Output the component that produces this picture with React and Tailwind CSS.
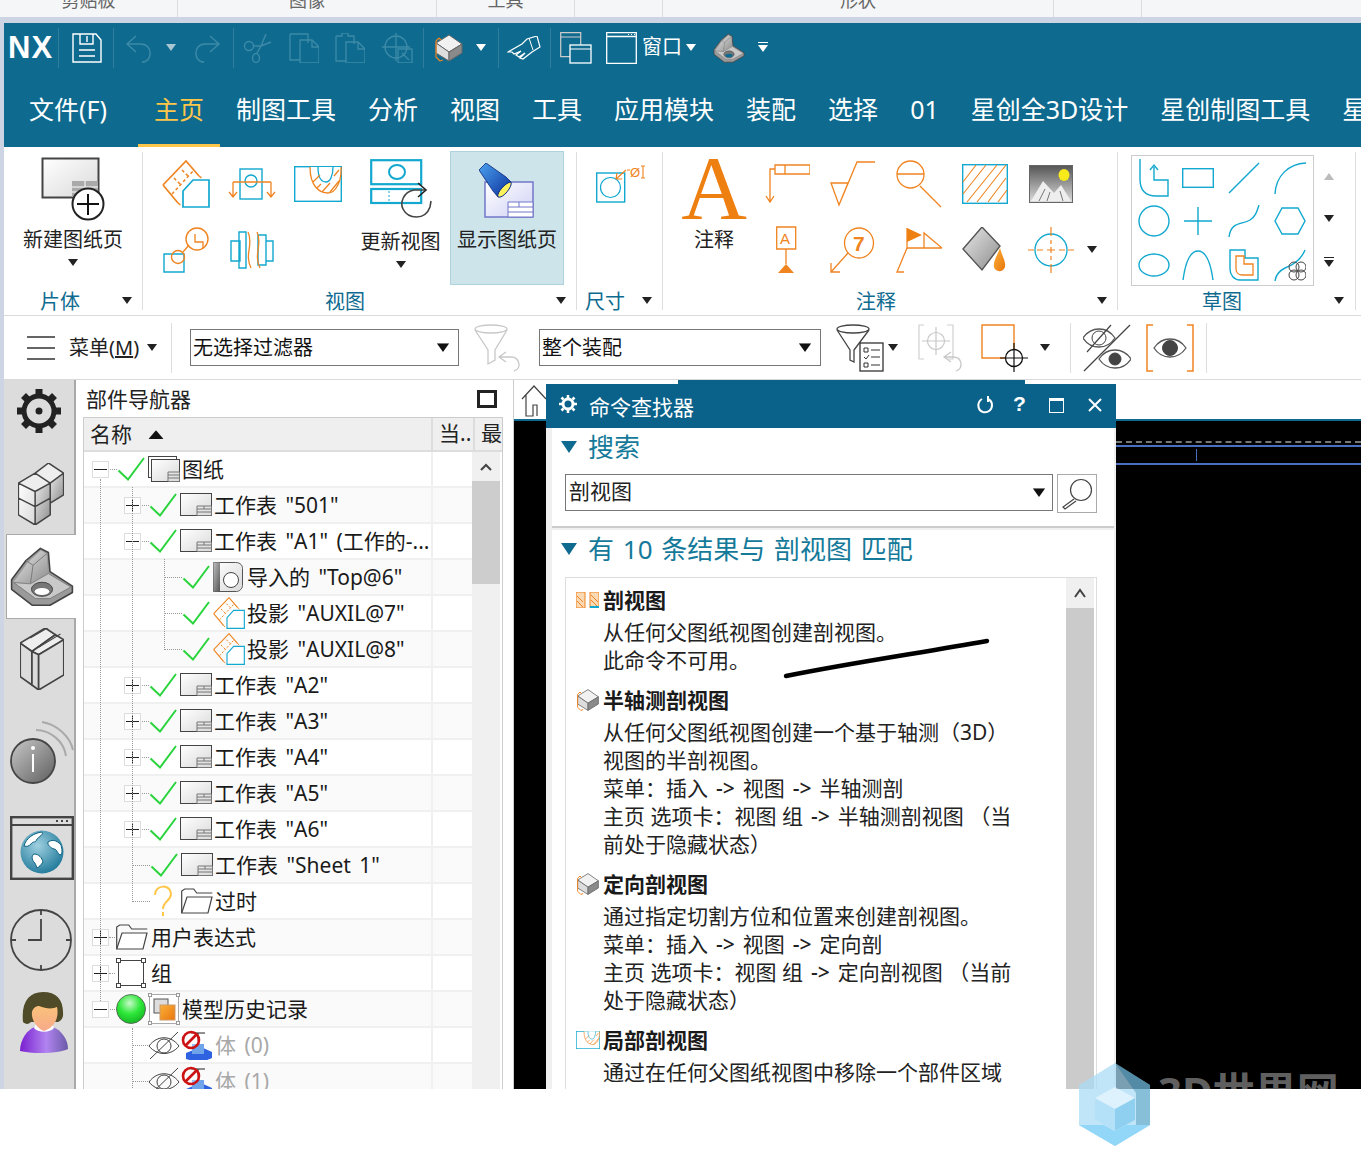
import React from 'react';

const OR = '#ef8420';
const CY = '#12a8cf';

// tiny dropdown triangle
const Tri = ({ fill = '#222', bar = false, className = '' }) => (
  <svg width="10" height={bar ? 11 : 7} viewBox={bar ? '0 0 10 11' : '0 0 10 7'} className={`flex-none ${className}`}>
    {bar && <path d="M0 0.5h10" stroke={fill} />}
    <path d={bar ? 'M0 3h10L5 10z' : 'M0 0h10L5 7z'} fill={fill} />
  </svg>
);

const Ic = ({ w = 48, h = 48, vb, className = '', children }) => (
  <svg width={w} height={h} viewBox={vb || `0 0 ${w} ${h}`} fill="none" className={`flex-none ${className}`}>
    {children}
  </svg>
);

const Defs = () => (
  <svg width="0" height="0" className="absolute">
    <defs>
      <linearGradient id="gPaper" x1="0" y1="0" x2="1" y2="1">
        <stop offset="0" stopColor="#fff" />
        <stop offset="1" stopColor="#d9d9d9" />
      </linearGradient>
      <linearGradient id="gGrey" x1="0" y1="0" x2="1" y2="1">
        <stop offset="0" stopColor="#e8e8e8" />
        <stop offset="1" stopColor="#8d8d8d" />
      </linearGradient>
      <linearGradient id="gDark" x1="0" y1="0" x2="1" y2="1">
        <stop offset="0" stopColor="#bdbdbd" />
        <stop offset="1" stopColor="#555" />
      </linearGradient>
      <linearGradient id="gLav" x1="0" y1="0" x2="1" y2="1">
        <stop offset="0" stopColor="#fff" />
        <stop offset="1" stopColor="#cfd0f5" />
      </linearGradient>
      <linearGradient id="gTorch" x1="0" y1="0" x2="1" y2="1">
        <stop offset="0" stopColor="#4aa2f0" />
        <stop offset="1" stopColor="#0c2f9a" />
      </linearGradient>
      <linearGradient id="gOrange" x1="0" y1="0" x2="1" y2="1">
        <stop offset="0" stopColor="#fbb03b" />
        <stop offset="1" stopColor="#e9760c" />
      </linearGradient>
      <linearGradient id="gSky" x1="0" y1="0" x2="0" y2="1">
        <stop offset="0" stopColor="#555" />
        <stop offset="1" stopColor="#ddd" />
      </linearGradient>
      <radialGradient id="gBall" cx="0.45" cy="0.3" r="0.75">
        <stop offset="0" stopColor="#c8f8c8" />
        <stop offset="0.5" stopColor="#2ee83a" />
        <stop offset="1" stopColor="#12b020" />
      </radialGradient>
      <radialGradient id="gGlobe" cx="0.4" cy="0.35" r="0.8">
        <stop offset="0" stopColor="#9fd0e0" />
        <stop offset="1" stopColor="#0b6b8f" />
      </radialGradient>
      <linearGradient id="gPurple" x1="0" y1="0" x2="1" y2="0">
        <stop offset="0" stopColor="#7a1fd0" />
        <stop offset="0.55" stopColor="#b184f0" />
        <stop offset="1" stopColor="#6b5aa8" />
      </linearGradient>
      <linearGradient id="gFace" x1="0" y1="0" x2="0" y2="1">
        <stop offset="0" stopColor="#fbc27a" />
        <stop offset="1" stopColor="#f7a98a" />
      </linearGradient>
      <linearGradient id="gInfo" x1="0" y1="0" x2="1" y2="1">
        <stop offset="0" stopColor="#c9c9c9" />
        <stop offset="1" stopColor="#5e5e5e" />
      </linearGradient>
    </defs>
  </svg>
);

/* ---------- quick access ---------- */
const DIM = '#3d8aa8';
const SaveIcon = () => (
  <Ic w={30} h={30}>
    <path d="M1 1h23l5 6v22H1z" stroke="#fff" strokeWidth="1.4" />
    <path d="M8 1v10h13V1M15 3v6M7 17h16M7 23h16" stroke="#fff" strokeWidth="1.4" />
  </Ic>
);
const Undo = ({ flip }) => (
  <Ic w={28} h={30} className={flip ? '-scale-x-100' : ''}>
    <path d="M11 3L2 11l9 8M2 11h14c12 0 12 18 1 18" stroke={DIM} strokeWidth="1.4" />
  </Ic>
);
const Scissors = () => (
  <Ic w={30} h={30}>
    <g stroke={DIM} strokeWidth="1.4">
      <circle cx="6" cy="13" r="4.5" /><ellipse cx="13" cy="25" rx="3.5" ry="4.5" />
      <path d="M10 13h8l10-4M14 20l4-7 5-12" />
    </g>
  </Ic>
);
const CopyIc = () => (
  <Ic w={30} h={30}>
    <path d="M1 1h18v9M1 1v26h10" stroke={DIM} strokeWidth="1.3" />
    <path d="M11 7h12l7 7v16H11z M23 7v7h7" stroke={DIM} strokeWidth="1.3" />
  </Ic>
);
const PasteIc = () => (
  <Ic w={30} h={30}>
    <path d="M1 3h6V0h6v3h6v8M1 3v25h10" stroke={DIM} strokeWidth="1.3" />
    <path d="M11 9h12l7 7v14H11z M23 9v7h7" stroke={DIM} strokeWidth="1.3" />
  </Ic>
);
const CrossIc = () => (
  <Ic w={32} h={30}>
    <circle cx="15" cy="14" r="11" stroke={DIM} strokeWidth="1.3" />
    <path d="M15 0v28M1 14h28M17 16h14v14H17zM21 20l7 7" stroke={DIM} strokeWidth="1.3" />
  </Ic>
);
const ShapeIc = ({ s = 30 }) => (
  <Ic w={s} h={s} vb="0 0 30 30">
    <path d="M2 10L15 2l13 9-13 8z" fill="#f1f1f1" stroke="#666" strokeWidth="1" />
    <path d="M2 10l13 9v9L2 20z" fill="#ddd" stroke="#666" strokeWidth="1" />
    <path d="M15 19l13-8v9l-13 8z" fill="#8a8a8a" stroke="#666" strokeWidth="1" />
    <path d="M5 5L2 8v16l4 4M5 5l2 2M6 28l3-1" stroke={OR} strokeWidth="1.2" />
  </Ic>
);
const HandIc = () => (
  <Ic w={34} h={24}>
    <path d="M1 16l14-8 5-5 10-3 3 11-8 5-9 7-3-1 5-5-6 4-3-2 5-4-7 3-2-2z" stroke="#fff" strokeWidth="1.2" />
    <path d="M22 2l4 12" stroke="#fff" strokeWidth="1" />
  </Ic>
);
const WinA = () => (
  <Ic w={32} h={32}>
    <path d="M.7.7h20v24H.7zM.7 5h20" stroke="#ccc" strokeWidth="1.2" />
    <rect x="10" y="13" width="21" height="18" fill="#0e6b8f" stroke="#fff" strokeWidth="1.3" />
    <path d="M10 17h21" stroke="#fff" />
  </Ic>
);
const WinB = () => (
  <Ic w={31} h={32}>
    <path d="M.7.7h29.6v30.6H.7zM.7 4.5h29.6" stroke="#fff" strokeWidth="1.3" />
    <path d="M22 2.5h1M25 2.5h1M28 2.5h1" stroke="#fff" />
  </Ic>
);
// bracket with gusset and a hole, same part in the quick bar and the side tab
const PartIc = ({ w = 32, h = 30, hole = '#0e6b8f' }) => (
  <Ic w={w} h={h} vb="0 0 200 190">
    <path d="M5 105L50 45 95 7l25 13 5 60 70 45v20l-70 40H70L5 135z" fill="#9a9a9a" stroke="#444" strokeWidth="5" strokeLinejoin="round" />
    <path d="M12 112L55 52 96 14l18 10 5 62-55 30z" fill="url(#gGrey)" />
    <path d="M12 114l52 4 56-32 70 42-65 36H80z" fill="#c9c9c9" stroke="#666" strokeWidth="2" />
    <path d="M50 45l22 15 42-36M72 60L64 116" stroke="#777" strokeWidth="3" />
    <ellipse cx="100" cy="135" rx="33" ry="22" fill="#777" stroke="#444" strokeWidth="3" />
    <ellipse cx="100" cy="142" rx="23" ry="11" fill={hole} />
  </Ic>
);

/* ---------- ribbon icons ---------- */
const NewSheetIc = () => (
  <Ic w={64} h={64}>
    <rect x="1.5" y="1.5" width="56" height="39" fill="url(#gPaper)" stroke="#444" strokeWidth="2" />
    <path d="M31 24h26v16H31z" fill="#aaa" /><path d="M31 30h26M44 24v6M31 35h26" stroke="#fff" />
    <circle cx="47" cy="47" r="15.5" fill="#fff" stroke="#222" strokeWidth="2" />
    <path d="M47 37v21M36 47h22" stroke="#111" strokeWidth="2" />
  </Ic>
);
const ProjIc = ({ s = 48 }) => (
  <Ic w={s} h={s} vb="0 0 48 48">
    <path d="M1 25L24 1l13 15M1 25l15 18" stroke={OR} strokeWidth="1.7" />
    <path d="M16 43l5 4M37 16l4 3M10 34L32 10M12 18l6 6M20 10l6 6" stroke={OR} strokeWidth="1.5" strokeDasharray="3 2.500" />
    <path d="M21 47V31l10-11h16v27z" fill="#fff" stroke={CY} strokeWidth="1.7" />
  </Ic>
);
const SectionIc = () => (
  <Ic w={48} h={32}>
    <rect x="12" y="1" width="22" height="30" stroke={CY} strokeWidth="1.4" />
    <circle cx="23" cy="13" r="6" stroke={CY} strokeWidth="1.4" />
    <path d="M5 14h38M5 14v15M1 24l4 5 4-5M43 14v15M39 24l4 5 4-5" stroke={OR} strokeWidth="1.3" />
  </Ic>
);
const DetailIc = ({ w = 48, h = 36 }) => (
  <Ic w={w} h={h} vb="0 0 48 36">
    <rect x=".7" y=".7" width="46.6" height="34.6" fill="#fff" stroke={CY} strokeWidth="1.4" />
    <path d="M16 1c0 20 10 26 18 26s13-12 13-22V1" fill="#fff" stroke={OR} strokeWidth="1.3" />
    <path d="M24 1c0 12 4 15 8 15s7-6 7-15" fill="#fff" stroke={CY} strokeWidth="1.3" />
    <path d="M19 16l7-7M23 22l4-4M28 26l8-9M36 26l9-11M40 10l5-6" stroke={OR} strokeWidth="1.3" />
  </Ic>
);
const BreakoutIc = () => (
  <Ic w={46} h={46}>
    <path d="M1 27h20v18H1z" stroke={CY} strokeWidth="1.4" fill="#fff" />
    <circle cx="34" cy="12" r="11" stroke={OR} strokeWidth="1.4" fill="#fff" />
    <circle cx="15" cy="30" r="6.500" stroke={OR} strokeWidth="1.4" />
    <path d="M20 25l6-7M32 7v8h8v6" stroke={OR} strokeWidth="1.3" />
  </Ic>
);
const BrokenIc = () => (
  <Ic w={44} h={38}>
    <path d="M1 10h9v20H1zM9 1h7v36H9zM28 4h8v30h-8zM36 10h7v20h-7z" stroke={CY} strokeWidth="1.4" fill="#fff" />
    <path d="M18 1c6 12-4 22 3 36M27 1c6 12-4 22 3 36" stroke={OR} strokeWidth="1.3" />
  </Ic>
);
const UpdateIc = () => (
  <Ic w={62} h={62}>
    <rect x="1.2" y="1.2" width="50" height="24" stroke={CY} strokeWidth="2.2" />
    <ellipse cx="27" cy="13" rx="8" ry="7" stroke={CY} strokeWidth="2" />
    <rect x="1.2" y="30" width="50" height="14" stroke={CY} strokeWidth="2.2" />
    <path d="M19 32v10" stroke={CY} strokeDasharray="2 2" />
    <path d="M55 31H44C33 33 30 44 33 50c5 10 22 12 27-2l1-6" stroke="#444" strokeWidth="1.6" />
    <path d="M48 24l8 7-8 7" stroke="#222" strokeWidth="1.6" />
  </Ic>
);
const DisplayIc = () => (
  <Ic w={56} h={56}>
    <rect x="6" y="19" width="48" height="35" fill="url(#gLav)" stroke="#7377c8" strokeWidth="1.5" />
    <path d="M29 39h25v15H29z" fill="#fff" stroke="#7377c8" /><path d="M29 44h25M29 49h25M40 39v5" stroke="#7377c8" />
    <path d="M0 7l7-7 20 14 5 5-13 15-5-6z" fill="url(#gTorch)" stroke="#08237a" strokeWidth=".8" />
    <path d="M19 34c-2-4 8-15 13-15 2 4-8 17-13 15z" fill="#fbf25e" stroke="#0a2a86" />
  </Ic>
);
const DimIc = () => (
  <Ic w={50} h={38}>
    <rect x=".7" y="8" width="28" height="29" stroke={CY} strokeWidth="1.4" />
    <circle cx="14.5" cy="22.5" r="10" stroke={CY} strokeWidth="1.2" />
    <path d="M20 14l10-9M20 14l1-6M20 14l6 0" stroke={OR} strokeWidth="1.2" />
    <path d="M31 5h3M45 1h4M47 1v12M45 13h4" stroke={OR} strokeWidth="1.1" />
    <text x="34" y="12" fontSize="13" fill={OR} fontFamily="Liberation Sans">Ø</text>
  </Ic>
);
const LeaderIc = () => (
  <Ic w={46} h={42}>
    <path d="M11 2h35v9H11zM21 2v9M11 6H6v32M2 33l4 6 4-6" stroke={OR} strokeWidth="1.3" />
  </Ic>
);
const SurfaceIc = () => (
  <Ic w={46} h={46}>
    <path d="M1 22h17L9 44zM9 44L27 1h18" stroke={OR} strokeWidth="1.3" />
  </Ic>
);
const DatumIc = () => (
  <Ic w={46} h={48}>
    <circle cx="14.5" cy="14.5" r="13.5" stroke={OR} strokeWidth="1.3" />
    <path d="M1 14h27M24 26l21 21" stroke={OR} strokeWidth="1.3" />
  </Ic>
);
const HatchIc = () => (
  <Ic w={46} h={40}>
    <rect x=".7" y=".7" width="44.6" height="38.6" fill="#fff" stroke={CY} strokeWidth="1.4" />
    <path d="M1 18L14 1M1 30L24 1M5 38L35 1M15 38L44 1M26 38L44 14M36 38l9-12" stroke={OR} strokeWidth="1.1" />
  </Ic>
);
const ImageIc = () => (
  <Ic w={44} h={38}>
    <rect x=".5" y=".5" width="43" height="37" fill="url(#gSky)" stroke="#666" />
    <ellipse cx="35" cy="10" rx="5.500" ry="6" fill="#f7ea1a" />
    <path d="M2 36l12-20 11 12 7-8 10 16z" fill="#eee" />
    <path d="M10 36l6-12M18 36l3-9M34 36l-3-10" stroke="#777" />
  </Ic>
);
const WeldIc = () => (
  <Ic w={24} h={48}>
    <path d="M1.7 1h19v22h-19zM11 23v15" stroke={OR} strokeWidth="1.3" />
    <path d="M3 47l8-9 8 9z" fill={OR} />
    <text x="5" y="18" fontSize="15" fill={OR} fontFamily="Liberation Sans">A</text>
  </Ic>
);
const BalloonIc = () => (
  <Ic w={46} h={46}>
    <ellipse cx="29" cy="16" rx="14.500" ry="15" stroke={OR} strokeWidth="1.3" />
    <path d="M18 26L1 45M1 36v9h9" stroke={OR} strokeWidth="1.3" />
    <text x="23" y="24" fontSize="21" fontWeight="700" fill={OR} fontFamily="Liberation Sans">7</text>
  </Ic>
);
const FlagIc = () => (
  <Ic w={46} h={46}>
    <path d="M11 1l15 7-15 7z" fill="#ee7f11" />
    <path d="M11 1v20M11 21H46L28 6v15M11 21L1 45h7" stroke={OR} strokeWidth="1.3" />
  </Ic>
);
const FillIc = () => (
  <Ic w={46} h={46}>
    <path d="M1 22L20 0l18 19-18 24z" fill="url(#gGrey)" stroke="#555" strokeWidth="1.4" />
    <path d="M38 21c-3 8-7 13-6 19 1 5 9 6 11 0 1-6-3-11-5-19z" fill="url(#gOrange)" />
  </Ic>
);
const CenterIc = () => (
  <Ic w={46} h={46}>
    <ellipse cx="23" cy="23" rx="16" ry="16" stroke={CY} strokeWidth="1.3" />
    <path d="M23 0v9M23 13v4M23 20v6M23 29v4M23 37v9M0 23h6M9 23h6M19 23h8M31 23h6M40 23h6" stroke={OR} strokeWidth="1.2" />
  </Ic>
);
const sk = { stroke: CY, strokeWidth: 1.4 };
const SkIcons = [
  <Ic w={30} h={40}><path d="M1 1v20c0 12 6 17 16 17h12V22H15V9M11 12l4-5 4 5" {...sk} /></Ic>,
  <Ic w={32} h={20}><rect x=".7" y=".7" width="30.6" height="18.6" {...sk} /></Ic>,
  <Ic w={32} h={32}><path d="M1 31L31 1" {...sk} /></Ic>,
  <Ic w={32} h={32}><path d="M1 32C2 14 14 2 32 1" {...sk} /></Ic>,
  <Ic w={32} h={32}><ellipse cx="16" cy="16" rx="15" ry="15" {...sk} /></Ic>,
  <Ic w={28} h={28}><path d="M14 0v28M0 14h28" {...sk} /></Ic>,
  <Ic w={32} h={32}><path d="M1 32C3 16 14 20 22 15 28 11 29 6 31 0" {...sk} /></Ic>,
  <Ic w={32} h={28}><path d="M8 1h16l7 13-7 13H8L1 14z" {...sk} /></Ic>,
  <Ic w={32} h={24}><ellipse cx="16" cy="12" rx="15" ry="11" {...sk} /></Ic>,
  <Ic w={32} h={30}><path d="M1 30C4 8 10 1 16 1s12 7 15 29" {...sk} /></Ic>,
  <Ic w={30} h={32}>
    <path d="M1 1h15v8h13v22H11C5 31 1 26 1 20z" {...sk} />
    <path d="M7 7h8v8h9v11H13c-4 0-6-3-6-6z" stroke={OR} strokeWidth="1.3" />
  </Ic>,
  <Ic w={32} h={32}>
    <path d="M1 32c1-8 6-11 10-13 8-3 16-8 20-18" {...sk} />
    <g stroke="#444" strokeWidth="1"><circle cx="20" cy="18" r="5" /><circle cx="27" cy="18" r="5" /><circle cx="20" cy="26" r="5" /><circle cx="27" cy="26" r="5" /></g>
  </Ic>,
];

/* ---------- toolbar icons ---------- */
const FunnelGhost = () => (
  <Ic w={48} h={48}>
    <ellipse cx="17" cy="5" rx="16" ry="4" stroke="#c8c8c8" strokeWidth="1.3" />
    <path d="M1 6l13 20v14l7-4V26L33 6" stroke="#c8c8c8" strokeWidth="1.3" />
    <path d="M32 28l-7 5 7 5M25 33h12c9 0 11 12 3 14" stroke="#c8c8c8" strokeWidth="1.3" />
  </Ic>
);
const FunnelList = () => (
  <Ic w={48} h={48}>
    <ellipse cx="17" cy="5" rx="16" ry="4" stroke="#444" strokeWidth="1.3" />
    <path d="M1 6l13 20v10l4 2V26L33 6" stroke="#444" strokeWidth="1.3" />
    <rect x="24" y="19" width="23" height="28" fill="#fff" stroke="#333" strokeWidth="1.3" />
    <path d="M28 24h4v4h-4zM35 26h9M28 33l2 2 3-4M35 33h9M28 39h4v4h-4zM35 41h9" stroke="#333" />
  </Ic>
);
const GhostTarget = () => (
  <Ic w={48} h={48}>
    <path d="M6 1H1v34h5M29 1h6v34h-5" stroke="#d0d0d0" strokeWidth="1.2" />
    <circle cx="18" cy="17" r="8.500" stroke="#c8c8c8" strokeWidth="1.2" />
    <path d="M18 3v28M4 17h28" stroke="#c8c8c8" strokeWidth="1.2" />
    <path d="M33 28l-7 5 7 5M26 33h9c9 0 11 11 3 14" stroke="#c8c8c8" strokeWidth="1.3" />
  </Ic>
);
const OrangeTarget = () => (
  <Ic w={48} h={48}>
    <path d="M1 1h32v33H1z" stroke={OR} strokeWidth="1.4" />
    <circle cx="33" cy="34" r="8.500" fill="#fff" stroke="#111" strokeWidth="1.3" />
    <path d="M33 19v29M19 34h28" stroke="#111" strokeWidth="1.2" />
  </Ic>
);
const EyeShape = ({ cx, cy, pupil = '#444', r = 6 }) => (
  <g>
    <path d={`M${cx - 16} ${cy}c8-12 24-12 32 0-8 12-24 12-32 0z`} fill="#fff" stroke="#555" strokeWidth="1.3" />
    <circle cx={cx} cy={cy} r={r} fill={pupil} stroke="#444" />
  </g>
);
const EyeCross = () => (
  <Ic w={48} h={48}>
    <EyeShape cx={16} cy={14} pupil="none" r={7} />
    <path d="M4 28L28 1" stroke="#444" strokeWidth="1.2" />
    <path d="M1 47L47 1" stroke="#444" strokeWidth="1.3" />
    <EyeShape cx={32} cy={35} />
  </Ic>
);
const EyeBrackets = () => (
  <Ic w={48} h={48}>
    <path d="M7 1H1v46h6M41 1h6v46h-6" stroke={OR} strokeWidth="1.5" />
    <EyeShape cx={24} cy={24} r={7.5} />
  </Ic>
);

/* ---------- side tabs ---------- */
const GearIc = () => (
  <Ic w={46} h={46} vb="0 0 46 46">
    <circle cx="23" cy="23" r="15" stroke="#222" strokeWidth="5" />
    <path d="M23 1v7M23 38v7M1 23h7M38 23h7M7.500 7.500l5 5M33.500 33.500l5 5M38.500 7.500l-5 5M12.500 33.500l-5 5" stroke="#222" strokeWidth="7" />
    <circle cx="23" cy="23" r="3.500" fill="#222" />
  </Ic>
);
const CubesIc = () => (
  <Ic w={46} h={62} vb="0 0 135 185">
    <path d="M0 60L50 30 90 0l45 30-40 30-45 25z" fill="#eee" />
    <path d="M0 60l50 25v100L0 155z" fill="url(#gPaper)" />
    <path d="M50 85l45-25v95l-45 30z" fill="url(#gGrey)" />
    <path d="M95 60l40-30v65l-40 25z" fill="url(#gGrey)" />
    <path d="M0 60L50 30 90 0l45 30v65l-40 25v35l-45 30-50-30zM50 30l45 30 40-30M95 60v60M50 85l45-25M0 60l50 25v100M0 105l50 25 45-25" stroke="#444" strokeWidth="4.500" strokeLinejoin="round" />
  </Ic>
);
const BooksIc = () => (
  <Ic w={44} h={62} vb="0 0 130 185">
    <g stroke="#444" strokeWidth="5" strokeLinejoin="round" fill="#dcdcdc">
      <path d="M0 45L75 0l30 20-70 50z" fill="#eee" />
      <path d="M0 45v100l35 25V70z" />
      <path d="M35 70l70-50 25 15-75 45z" fill="#eee" />
      <path d="M35 70l20 10v105l-20-15z" />
      <path d="M55 80l75-45v105l-75 45z" />
    </g>
    <path d="M30 30l65-38M55 58l65-40" stroke="#444" strokeWidth="3" />
  </Ic>
);
const InfoIc = () => (
  <Ic w={64} h={64}>
    <circle cx="23" cy="41" r="22" fill="url(#gInfo)" stroke="#444" strokeWidth="1.8" />
    <circle cx="23" cy="28" r="2" fill="#fff" />
    <path d="M23 34v18" stroke="#fff" strokeWidth="2" />
    <path d="M26 10c14 0 28 11 30 26M32 2c14 2 28 14 31 28" stroke="#aaa" strokeWidth="2" />
  </Ic>
);
const BrowserIc = () => (
  <Ic w={64} h={64}>
    <rect x="1.2" y="1.2" width="61.6" height="61.6" stroke="#444" strokeWidth="2.4" />
    <path d="M1 9h62" stroke="#444" strokeWidth="2" />
    <path d="M46 5h2M51 5h2M56 5h2" stroke="#444" strokeWidth="2" />
    <circle cx="32" cy="36" r="21.500" fill="url(#gGlobe)" />
    <path d="M14 30c2-8 10-13 18-14 2 2-3 5-5 7-1 4-4 2-6 5-2 2-4 3-7 2zM38 26c3-2 8-3 13 3 1 4 2 9-1 10-3-2-3-6-6-6-3-1-7-4-6-7zM24 38c5 0 8 4 9 8-2 3-4 5-6 6-1-3-2-5-3-6-2-2-3-6 0-8z" fill="#fff" stroke="#0b5f80" />
  </Ic>
);
const ClockIc = () => (
  <Ic w={62} h={62}>
    <circle cx="31" cy="31" r="30" stroke="#444" strokeWidth="1.8" />
    <path d="M31 1v5M31 56v5M1 31h5M56 31h5M31 10v21H18" stroke="#444" strokeWidth="1.8" />
  </Ic>
);
const UserIc = () => (
  <Ic w={50} h={62}>
    <path d="M1 59c0-12 8-22 15-24h18c8 3 15 12 15 22-10 5-36 5-48 2z" fill="url(#gPurple)" />
    <path d="M15 36c4 5 16 5 20 0l-2-4H17z" fill="#fff" />
    <path d="M4 30C2 10 10 0 24 0s21 8 20 24c-1 4-4 6-6 6H12c-3 3-6 2-8 0z" fill="#4f4a28" />
    <path d="M13 20c1-4 4-6 7-6 7 3 14 3 18 1 2 9-1 20-13 24-8-3-13-12-12-19z" fill="url(#gFace)" />
  </Ic>
);

/* ---------- tree icons ---------- */
const Check = () => (
  <Ic w={28} h={24}><path d="M1.500 13.500l9.500 9L27 1" stroke="#2ad43c" strokeWidth="2" /></Ic>
);
const Sheet = () => (
  <Ic w={32} h={24} vb="0 0 32 24">
    <rect x=".5" y=".5" width="31" height="22" fill="url(#gPaper)" stroke="#444" />
    <path d="M17 13h14.500v9.500H17zM17 16h14.500M17 19h14.500M24 13v3" stroke="#777" />
  </Ic>
);
const SheetStack = () => (
  <Ic w={32} h={26}>
    <rect x=".5" y=".5" width="28" height="21" fill="#fff" stroke="#444" />
    <rect x="3.500" y="3.500" width="28" height="22" fill="url(#gPaper)" stroke="#444" />
    <path d="M20 16h11.500v9.500H20zM20 19h11.500M20 22h11.500" stroke="#777" />
  </Ic>
);
const ViewIc = () => (
  <Ic w={30} h={30}>
    <path d="M.5.5h22c5 0 7 3 7 6v17c0 3-3 6-6 6H.5z" fill="url(#gPaper)" stroke="#555" />
    <path d="M.5.5H7v29H.5z" fill="url(#gDark)" />
    <circle cx="18" cy="18" r="7.500" fill="#fff" stroke="#444" />
  </Ic>
);
const Folder = () => (
  <Ic w={32} h={26}>
    <path d="M.7 25V3l3-2h9l3 4h15.600" stroke="#444" strokeWidth="1.2" />
    <path d="M.7 25L6 9h25l-4 16z" fill="#fff" stroke="#444" strokeWidth="1.2" />
  </Ic>
);
const GroupIc = () => (
  <Ic w={30} h={30}>
    <rect x="2.500" y="2.500" width="25" height="25" stroke="#444" />
    {[0, 25].map((x) => [0, 25].map((y) => <rect key={`${x}${y}`} x={x + .5} y={y + .5} width="4" height="4" fill="#fff" stroke="#444" />))}
  </Ic>
);
const HistIc = () => (
  <Ic w={32} h={32}>
    <rect x="1.500" y="1.500" width="29" height="29" fill="#fff" stroke="#aaa" />
    {[0, 28].map((x) => [0, 28].map((y) => <rect key={`${x}${y}`} x={x + .5} y={y + .5} width="3" height="3" fill="#fff" stroke="#999" />))}
    <rect x="6" y="6" width="14" height="14" fill="#ddd" stroke="#555" />
    <rect x="12" y="12" width="15" height="15" fill="url(#gOrange)" stroke="#c96" />
  </Ic>
);
const Ball = () => (
  <Ic w={30} h={30} className="-ml-px"><circle cx="15" cy="15" r="14.500" fill="url(#gBall)" stroke="#555" strokeWidth=".8" /></Ic>
);
const Question = () => (
  <Ic w={20} h={32} className="ml-[3px]">
    <path d="M2 10c0-11 16-11 16-1 0 7-8 7-8 15" stroke="#ffc64a" strokeWidth="2" />
    <path d="M10 27v4" stroke="#ffc64a" strokeWidth="2" />
  </Ic>
);
const EyeOff = () => (
  <Ic w={32} h={30} className="-ml-[2px]">
    <path d="M1 16c8-11 22-11 30 0-8 10-22 10-30 0z" stroke="#444" />
    <circle cx="16" cy="16" r="7" stroke="#444" />
    <path d="M2 29L30 2" stroke="#444" />
  </Ic>
);
const Blocked = () => (
  <Ic w={32} h={30}>
    <path d="M5 23l15-6 11 5v6l-12 5-14-4z" fill="#2e62e0" />
    <path d="M11 14h12v10H11z" fill="#6fa3ea" />
    <path d="M10 3h14M17 3v8" stroke="#222" />
    <circle cx="10" cy="10" r="8" fill="#fff" fillOpacity=".3" stroke="#cc1212" strokeWidth="2.600" />
    <path d="M4 16L16 4" stroke="#cc1212" strokeWidth="2.600" />
  </Ic>
);
const Exp = ({ plus }) => (
  <Ic w={17} h={17}>
    <rect x=".5" y=".5" width="16" height="16" fill="#fff" stroke="#ddd" />
    <path d="M2 8.500h13" stroke="#222" />
    {plus && <path d="M8.500 2v13" stroke="#222" />}
  </Ic>
);

const sheets = ['A2', 'A3', 'A4', 'A5', 'A6'];
const rows = [
  { lv: 0, exp: '-', status: <Check />, icon: <SheetStack />, text: '图纸' },
  { lv: 1, exp: '+', status: <Check />, icon: <Sheet />, text: '工作表 "501"' },
  { lv: 1, exp: '-', status: <Check />, icon: <Sheet />, text: '工作表 "A1" (工作的-...' },
  { lv: 2, status: <Check />, icon: <ViewIc />, text: '导入的 "Top@6"' },
  { lv: 2, status: <Check />, icon: <ProjIc s={32} />, text: '投影 "AUXIL@7"' },
  { lv: 2, status: <Check />, icon: <ProjIc s={32} />, text: '投影 "AUXIL@8"' },
  ...sheets.map((s) => ({ lv: 1, exp: '+', status: <Check />, icon: <Sheet />, text: `工作表 "${s}"` })),
  { lv: 1, status: <Check />, icon: <Sheet />, text: '工作表 "Sheet 1"' },
  { lv: 1, status: <Question />, icon: <Folder />, text: '过时' },
  { lv: 0, exp: '+', icon: <Folder />, text: '用户表达式', tight: true },
  { lv: 0, exp: '+', icon: <GroupIc />, text: '组', tight: true },
  { lv: 0, exp: '-', status: <Ball />, icon: <HistIc />, text: '模型历史记录' },
  { lv: 1, status: <EyeOff />, icon: <Blocked />, text: '体 (0)', off: true },
  { lv: 1, status: <EyeOff />, icon: <Blocked />, text: '体 (1)', off: true },
];

const Stub = ({ className }) => <div className={`flex-none border-t border-dotted border-[#999] ${className}`} />;

const TreeRow = ({ row, index }) => (
  <div className={`h-[36px] flex border-b-2 border-[#f0f0f0] ${index % 2 ? 'bg-[#fafafa]' : 'bg-white'}`}>
    <div
      className="w-[349px] flex-none flex items-center border-r-2 border-[#f0f0f0] whitespace-nowrap"
      style={{ paddingLeft: 8 + row.lv * 32 }}
    >
      {row.exp ? (
        <>
          <Exp plus={row.exp === '+'} />
          <Stub className={row.tight ? 'w-[6px]' : 'ml-[1px] w-[7px]'} />
        </>
      ) : (
        <Stub className="ml-[8px] w-[18px]" />
      )}
      {!row.tight && <div className="w-[28px] flex-none flex items-center">{row.status}</div>}
      <div className={`flex-none flex items-center ${row.tight ? 'ml-[1px] w-[33px]' : 'ml-[3px] w-[32px]'}`}>{row.icon}</div>
      <span className={`text-[21px] leading-[28px] ml-[2px] [word-spacing:3px] ${row.off ? 'text-[#a8a8a8]' : 'text-[#1a1a1a]'}`}>{row.text}</span>
    </div>
  </div>
);

const Tree = () => (
  <div className="relative w-[388px] flex-none">
    {rows.map((r, i) => (
      <TreeRow key={i} row={r} index={i} />
    ))}
    <div className="absolute left-[16px] top-[27px] h-[522px] border-l border-dotted border-[#999]" />
    <div className="absolute left-[48px] top-[35px] h-[415px] border-l border-dotted border-[#999]" />
    <div className="absolute left-[48px] top-[576px] h-[150px] border-l border-dotted border-[#999]" />
    <div className="absolute left-[80px] top-[107px] h-[91px] border-l border-dotted border-[#999]" />
  </div>
);

const SideTabs = () => (
  <div className="w-[72px] flex-none flex flex-col bg-[#dcdcdc] border-r-2 border-[#a9a9a9]">
    <div className="h-[65px] pt-[8px] pl-[12px]"><GearIc /></div>
    <div className="h-[89px] pt-[18px] pl-[14px]"><CubesIc /></div>
    <div className="h-[85px] ml-[2px] -mr-[2px] bg-white border border-r-0 border-[#aaa] flex items-center pl-[3px] z-10">
      <PartIc w={64} h={61} hole="#fff" />
    </div>
    <div className="h-[86px] pt-[9px] pl-[16px]"><BooksIc /></div>
    <div className="h-[96px] pt-[15px] pl-[6px]"><InfoIc /></div>
    <div className="h-[94px] pt-[15px] pl-[6px]"><BrowserIc /></div>
    <div className="h-[90px] pt-[14px] pl-[6px]"><ClockIc /></div>
    <div className="pt-[7px] pl-[15px]"><UserIc /></div>
  </div>
);

const Group = ({ w, label, pl, mr = 'mr-[10px]', children }) => (
  <>
    <div className={`flex flex-col flex-none ${w}`}>
      <div className="h-[138px] flex">{children}</div>
      <div className="h-[30px] flex items-center">
        <span className={`text-[20px] leading-[28px] mt-[3px] text-[#0e6b8f] ${pl}`}>{label}</span>
        <Tri className={`ml-auto ${mr}`} />
      </div>
    </div>
    <div className="w-px flex-none my-[5px] bg-[#dedede]" />
  </>
);

const Combo = ({ w, text }) => (
  <div className={`${w} h-[37px] flex-none flex items-center pl-[2px] pr-[10px] border border-[#777] bg-white`}>
    <span className="text-[20px] leading-[28px] mt-[1px] text-[#111]">{text}</span>
    <Tri className="ml-auto scale-125" fill="#111" />
  </div>
);

// the source renders its "->" wider than the font does
const Line = ({ text }) => {
  const parts = text.split(' -> ');
  return parts.map((p, i) => (
    <React.Fragment key={i}>
      {p}
      {i < parts.length - 1 && <span className="mx-[8px] font-medium">-&gt;</span>}
    </React.Fragment>
  ));
};

const Result = ({ icon, title, lines }) => (
  <div className="mb-[12px]">
    <div className="flex items-center h-[28px] mb-[4px]">
      <div className="w-[27px] flex-none -ml-[1px] flex">{icon}</div>
      <span className="text-[21px] leading-[28px] font-bold text-[#1a1a1a]">{title}</span>
    </div>
    {lines.map((l, i) => (
      <div key={i} className="pl-[26px] text-[21px] leading-[28px] text-[#222] whitespace-nowrap"><Line text={l} /></div>
    ))}
  </div>
);

const SecIc = () => (
  <Ic w={23} h={16}>
    <path d="M0 0h9v16H0zM14 0h9v16h-9z" fill="#fbd9b4" stroke={OR} />
    <path d="M1 4l6 6M1 9l6 6M15 3l7 7M15 8l7 7" stroke={OR} />
    <path d="M14 14h9v2h-9z" fill={CY} />
  </Ic>
);

const tabs = ['制图工具', '分析', '视图', '工具', '应用模块', '装配', '选择', '01', '星创全3D设计', '星创制图工具', '星'];

export default function App() {
  return (
    <div className="relative w-[1361px] h-[1158px] overflow-hidden bg-white font-['Noto_Sans','Noto_Sans_CJK_SC',sans-serif]">
      <Defs />
      <div className="h-[1089px] overflow-hidden flex flex-col bg-[#cdd5e5]">
        {/* clipped row of the window behind */}
        <div className="h-[17px] flex-none flex bg-[#f5f6f8] overflow-hidden text-[18px] leading-[24px] text-[#666] text-center">
          <div className="w-[178px] -mt-[12px] h-[29px] border-r border-[#ddd]">剪贴板</div>
          <div className="w-[259px] -mt-[12px] h-[29px] border-r border-[#ddd]">图像</div>
          <div className="w-[138px] -mt-[12px] h-[29px] border-r border-[#ddd]">工具</div>
          <div className="w-[88px] -mt-[12px] h-[29px] border-r border-[#ddd]" />
          <div className="w-[391px] -mt-[12px] h-[29px] border-r border-[#ddd]">形状</div>
          <div className="w-[88px] -mt-[12px] h-[29px] border-r border-[#ddd]" />
        </div>
        <div className="h-[6px] flex-none" />

        <div className="flex-1 min-h-0 ml-[4px] flex flex-col">
          {/* title band */}
          <div className="h-[124px] flex-none bg-[#0e6b8f] text-white">
            <div className="h-[49px] flex items-center">
              <span className="ml-[4px] w-[46px] font-['Liberation_Sans'] font-bold text-[31px] leading-[36px] tracking-[1px]">NX</span>
              <div className="ml-[4px] w-px h-[40px] bg-[#2f7e9d]" />
              <div className="ml-[13px]"><SaveIcon /></div>
              <div className="ml-[11px] w-px h-[40px] bg-[#2f7e9d]" />
              <div className="ml-[11px]"><Undo /></div>
              <Tri className="ml-[13px]" fill="#a9c6d2" />
              <div className="ml-[17px]"><Undo flip /></div>
              <div className="ml-[12px] w-px h-[40px] bg-[#2f7e9d]" />
              <div className="ml-[9px]"><Scissors /></div>
              <div className="ml-[16px]"><CopyIc /></div>
              <div className="ml-[16px]"><PasteIc /></div>
              <div className="ml-[16px]"><CrossIc /></div>
              <div className="ml-[10px] w-px h-[40px] bg-[#2f7e9d]" />
              <div className="ml-[10px]"><ShapeIc /></div>
              <Tri className="ml-[12px]" fill="#fff" />
              <div className="ml-[12px] w-px h-[40px] bg-[#2f7e9d]" />
              <div className="ml-[8px]"><HandIc /></div>
              <div className="ml-[9px] w-px h-[40px] bg-[#2f7e9d]" />
              <div className="ml-[9px]"><WinA /></div>
              <div className="ml-[14px]"><WinB /></div>
              <span className="ml-[5px] w-[42px] text-[20px] leading-[28px] -mt-[2px]">窗口</span>
              <Tri className="ml-[2px]" fill="#fff" />
              <div className="ml-[17px]"><PartIc /></div>
              <Tri bar className="ml-[13px]" fill="#fff" />
            </div>
            <div className="h-[75px] flex overflow-hidden whitespace-nowrap text-[25px] leading-[74px]">
              <span className="ml-[25px] w-[109px] flex-none">文件(F)</span>
              <span className="px-[16px] h-[75px] flex-none border-b-[3px] border-[#ffc64a] text-[#ffc64a]">主页</span>
              {tabs.map((t) => (
                <span key={t} className="px-[16px] flex-none">{t}</span>
              ))}
            </div>
          </div>

          {/* ribbon */}
          <div className="h-[168px] flex-none flex bg-white">
            <Group w="w-[138px]" label="片体" pl="pl-[36px]">
              <div className="w-full pt-[10px] flex flex-col items-center">
                <NewSheetIc />
                <span className="mt-[7px] text-[20px] leading-[24px] text-[#222]">新建图纸页</span>
                <Tri className="mt-[7px]" />
              </div>
            </Group>
            <Group w="w-[433px]" label="视图" pl="pl-[182px]">
              <div className="pt-[4px] pl-[10px] flex">
                <div className="grid grid-cols-[66px_66px_66px] grid-rows-[66px_66px] place-items-center h-[132px]">
                  <ProjIc />
                  <SectionIc />
                  <DetailIc />
                  <BreakoutIc />
                  <BrokenIc />
                </div>
                <div className="w-[99px] flex-none pt-[8px] flex flex-col items-center">
                  <UpdateIc />
                  <span className="mt-[9px] text-[20px] leading-[24px] text-[#222]">更新视图</span>
                  <Tri className="mt-[7px]" />
                </div>
                <div className="w-[114px] h-[134px] flex-none bg-[#cce4ea] border border-[#aed3dd] flex flex-col items-center pt-[11px]">
                  <DisplayIc />
                  <span className="mt-[9px] text-[20px] leading-[24px] text-[#222] whitespace-nowrap">显示图纸页</span>
                </div>
              </div>
            </Group>
            <Group w="w-[85px]" label="尺寸" pl="pl-[8px]">
              <div className="pl-[19px] pt-[18px]"><DimIc /></div>
            </Group>
            <Group w="w-[454px]" label="注释" pl="pl-[193px]">
              <div className="pt-[4px] flex">
                <div className="ml-[19px] w-[72px] flex-none">
                  <div className="w-[64px] flex flex-col items-center">
                    <span className="font-['Liberation_Serif'] text-[91px] leading-[76px] text-[#ee7f11]">A</span>
                    <span className="mt-[1px] text-[20px] leading-[24px] text-[#222]">注释</span>
                  </div>
                </div>
                <div className="grid grid-cols-[66px_66px_66px_66px_66px] grid-rows-[66px_66px] place-items-center h-[132px]">
                  <LeaderIc />
                  <SurfaceIc />
                  <DatumIc />
                  <HatchIc />
                  <ImageIc />
                  <WeldIc />
                  <BalloonIc />
                  <FlagIc />
                  <FillIc />
                  <CenterIc />
                </div>
                <Tri className="ml-[3px] mt-[95px]" />
              </div>
            </Group>
            <Group w="w-[237px]" label="草图" pl="pl-[84px]" mr="mr-[11px]">
              <div className="ml-[13px] mt-[8px] flex">
                <div className="w-[183px] h-[131px] flex-none border border-[#ccc] grid grid-cols-[43px_46px_46px_46px] grid-rows-[43px_44px_44px] place-items-center">
                  {SkIcons.map((icon, i) => (
                    <React.Fragment key={i}>{icon}</React.Fragment>
                  ))}
                </div>
                <div className="ml-[10px] flex flex-col items-center justify-between py-[18px] h-[131px]">
                  <Tri className="rotate-180" fill="#bbb" />
                  <Tri />
                  <Tri bar />
                </div>
              </div>
            </Group>
          </div>

          {/* selection bar */}
          <div className="h-[65px] flex-none flex items-center bg-white border-y border-[#d9d9d9]">
            <Ic w={28} h={24} className="ml-[23px]"><path d="M0 1h28M0 12h28M0 23h28" stroke="#333" strokeWidth="1.6" /></Ic>
            <span className="ml-[14px] w-[74px] text-[20px] leading-[28px] mt-[1px] text-[#222] whitespace-nowrap">菜单(<span className="underline">M</span>)</span>
            <Tri className="ml-[4px]" />
            <div className="ml-[14px] w-px h-[50px] bg-[#ddd]" />
            <div className="ml-[18px]"><Combo w="w-[269px]" text="无选择过滤器" /></div>
            <div className="ml-[15px]"><FunnelGhost /></div>
            <div className="ml-[17px]"><Combo w="w-[282px]" text="整个装配" /></div>
            <div className="ml-[15px]"><FunnelList /></div>
            <Tri className="ml-[4px]" />
            <div className="ml-[20px]"><GhostTarget /></div>
            <div className="ml-[15px]"><OrangeTarget /></div>
            <Tri className="ml-[11px]" />
            <div className="ml-[20px] w-px h-[50px] bg-[#ddd]" />
            <div className="ml-[12px]"><EyeCross /></div>
            <div className="ml-[15px]"><EyeBrackets /></div>
            <div className="ml-[12px] w-px h-[50px] bg-[#ddd]" />
          </div>

          <div className="flex-1 min-h-0 flex bg-white">
            <SideTabs />

            {/* part navigator */}
            <div className="w-[437px] flex-none flex flex-col pl-[7px] bg-white">
              <div className="h-[37px] flex-none flex items-center pl-[3px] w-[420px]">
                <span className="text-[21px] leading-[28px] text-[#222]">部件导航器</span>
                <div className="ml-auto mr-[6px] w-[20px] h-[18px] border-[3px] border-[#222]" />
              </div>
              <div className="w-[420px] flex-1 min-h-0 border border-b-0 border-[#ccc] flex flex-col overflow-hidden">
                <div className="h-[34px] flex-none flex bg-[#efefef] border-b-2 border-[#ddd] text-[21px] leading-[30px] text-[#222]">
                  <div className="w-[349px] flex-none flex items-center pl-[6px] border-r-2 border-[#ddd]">
                    名称
                    <Tri className="ml-[19px] rotate-180 scale-x-150 scale-y-125" fill="#111" />
                  </div>
                  <div className="w-[42px] flex-none pl-[6px] border-r-2 border-[#ddd] overflow-hidden whitespace-nowrap">当..</div>
                  <div className="pl-[6px] overflow-hidden whitespace-nowrap">最</div>
                </div>
                <div className="flex flex-1 min-h-0 overflow-hidden">
                  <Tree />
                  <div className="w-[28px] flex-none bg-[#f0f0f0] flex flex-col">
                    <div className="h-[29px] flex items-center justify-center">
                      <Ic w={12} h={8}><path d="M1 7l5-5 5 5" stroke="#444" strokeWidth="2" /></Ic>
                    </div>
                    <div className="h-[103px] bg-[#cdcdcd]" />
                  </div>
                </div>
              </div>
            </div>

            {/* graphics window */}
            <div className="relative flex-1 min-w-0 flex flex-col border-l border-[#ccc]">
              <div className="h-[39px] flex-none flex items-end bg-white">
                <Ic w={26} h={32} className="ml-[7px] mb-[2px]">
                  <path d="M1 14L13 1l12 13M5 10v21h7V20h4v11" stroke="#444" strokeWidth="1.2" />
                </Ic>
              </div>
              <div className="h-[2px] flex-none bg-[#0e6b8f]" />
              <div className="flex-1 min-h-0 bg-black relative">
                {/* sheet border of the drawing */}
                <div className="absolute left-[602px] right-0 top-[20px] border-t-2 border-dashed border-[#777]" />
                <div className="absolute left-[602px] right-0 top-[24px] h-[20px] border-y-2 border-[#4a6fc0]" />
                <div className="absolute left-[682px] top-[28px] h-[12px] border-l border-[#4a6fc0]" />
              </div>

              <div className="absolute left-[164px] top-0 w-[347px] h-[4px] bg-[#0a628a]" />

              {/* command finder dialog */}
              <div className="absolute left-[32px] top-[4px] w-[570px] h-[710px] flex flex-col bg-[#f0f0f0]">
                <div className="h-[44px] flex-none flex items-center bg-[#0a628a] text-white">
                  <Ic w={18} h={18} className="ml-[13px] -mt-[4px]">
                    <circle cx="9" cy="9" r="5" stroke="#fff" strokeWidth="3" />
                    <path d="M9 0v3M9 15v3M0 9h3M15 9h3M2.500 2.500l2 2M13.500 13.500l2 2M15.500 2.500l-2 2M4.500 13.500l-2 2" stroke="#fff" strokeWidth="2.600" />
                  </Ic>
                  <span className="ml-[12px] text-[21px] leading-[28px] mt-[2px]">命令查找器</span>
                  <Ic w={16} h={18} className="ml-[283px] -mt-[2px]">
                    <path d="M5 3C0 6 0 14 6 16c5 1 9-2 9-7 0-3-2-5-4-6M11 0v6" stroke="#fff" strokeWidth="2" />
                  </Ic>
                  <span className="ml-[20px] w-[14px] font-['Liberation_Sans'] font-bold text-[21px] leading-[24px] -mt-[4px]">?</span>
                  <div className="ml-[22px] w-[15px] h-[15px] -mt-[2px] border border-t-[3px] border-white" />
                  <Ic w={14} h={14} className="ml-[24px] -mt-[2px]"><path d="M1 1l12 12M13 1L1 13" stroke="#fff" strokeWidth="2" /></Ic>
                </div>
                <div className="flex-1 min-h-0 ml-[6px] mr-[2px] flex flex-col">
                  <div className="h-[100px] flex-none bg-white border-b-2 border-[#ccc]">
                    <div className="h-[38px] flex items-center pl-[9px]">
                      <Ic w={16} h={12}><path d="M0 0h16L8 12z" fill="#0e6b8f" /></Ic>
                      <span className="ml-[11px] text-[26px] leading-[36px] text-[#157a9a]">搜索</span>
                    </div>
                    <div className="mt-[8px] ml-[13px] flex items-start">
                      <div className="w-[488px] h-[37px] flex items-center pl-[3px] pr-[8px] border border-[#777]">
                        <span className="text-[21px] leading-[28px] -mt-[3px] text-[#222]">剖视图</span>
                        <Tri className="ml-auto scale-125" fill="#111" />
                      </div>
                      <div className="ml-[4px] w-[40px] h-[39px] flex items-center justify-center border border-[#aaa]">
                        <Ic w={32} h={32}>
                          <circle cx="20" cy="12" r="10.500" stroke="#444" strokeWidth="1.200" />
                          <path d="M13 21L2 29l2 2 11-8" stroke="#444" strokeWidth="1.200" />
                        </Ic>
                      </div>
                    </div>
                  </div>
                  <div className="h-[2px] flex-none" />
                  <div className="flex-1 min-h-0 bg-white flex flex-col">
                    <div className="h-[38px] flex-none flex items-center pl-[9px]">
                      <Ic w={16} h={12}><path d="M0 0h16L8 12z" fill="#0e6b8f" /></Ic>
                      <span className="ml-[11px] text-[26px] leading-[36px] text-[#157a9a] whitespace-nowrap [word-spacing:2px]">有 10 条结果与 剖视图 匹配</span>
                    </div>
                    <div className="mt-[9px] ml-[13px] w-[532px] flex-1 min-h-0 flex border border-b-0 border-[#ddd] overflow-hidden">
                      <div className="w-[500px] flex-none pt-[8px] pl-[11px] overflow-hidden">
                        <Result
                          icon={<SecIc />}
                          title="剖视图"
                          lines={['从任何父图纸视图创建剖视图。', '此命令不可用。']}
                        />
                        <Result
                          icon={<ShapeIc s={24} />}
                          title="半轴测剖视图"
                          lines={[
                            '从任何父图纸视图创建一个基于轴测（3D）',
                            '视图的半剖视图。',
                            '菜单：插入 -> 视图 -> 半轴测剖',
                            '主页 选项卡：视图 组 -> 半轴测剖视图 （当',
                            '前处于隐藏状态）',
                          ]}
                        />
                        <Result
                          icon={<ShapeIc s={24} />}
                          title="定向剖视图"
                          lines={[
                            '通过指定切割方位和位置来创建剖视图。',
                            '菜单：插入 -> 视图 -> 定向剖',
                            '主页 选项卡：视图 组 -> 定向剖视图 （当前',
                            '处于隐藏状态）',
                          ]}
                        />
                        <Result
                          icon={<DetailIc w={24} h={18} />}
                          title="局部剖视图"
                          lines={['通过在任何父图纸视图中移除一个部件区域']}
                        />
                      </div>
                      <div className="w-[28px] flex-none flex flex-col">
                        <div className="h-[30px] flex-none bg-[#f0f0f0] flex items-center justify-center">
                          <Ic w={12} h={10}><path d="M1 9l5-7 5 7" stroke="#444" strokeWidth="2" /></Ic>
                        </div>
                        <div className="flex-1 bg-[#cbcbcb]" />
                      </div>
                    </div>
                  </div>
                </div>
              </div>
            </div>
          </div>
        </div>
      </div>

      {/* pen stroke drawn over the screenshot */}
      <svg width="215" height="48" viewBox="0 0 215 48" className="absolute left-[780px] top-[635px]">
        <path d="M6 41C70 28 140 18 207 6" stroke="#000" strokeWidth="4.500" strokeLinecap="round" fill="none" />
      </svg>

      {/* site watermark */}
      <svg width="74" height="84" viewBox="0 0 74 84" className="absolute left-[1078px] top-[1063px] opacity-85">
        <path d="M37 0l35 22v40L37 83 1 62V22z" fill="#a9dcf7" fillOpacity=".85" />
        <path d="M37 0l35 22v40H58V30z" fill="#3d8fb5" fillOpacity=".55" />
        <path d="M37 62L1 62l36 21 35-21z" fill="#7fd0f7" />
        <path d="M37 24l20 11v22L37 68 17 57V35z" fill="#d8f0fc" />
        <path d="M37 46l20-11v22L37 68z" fill="#7cc8ee" />
        <path d="M17 35l20 11v22L17 57z" fill="#a9dcf7" />
      </svg>
      <div className="absolute left-[1158px] top-[1066px] text-[42px] leading-[52px] font-bold text-white/40 whitespace-nowrap">3D世界网</div>
    </div>
  );
}
